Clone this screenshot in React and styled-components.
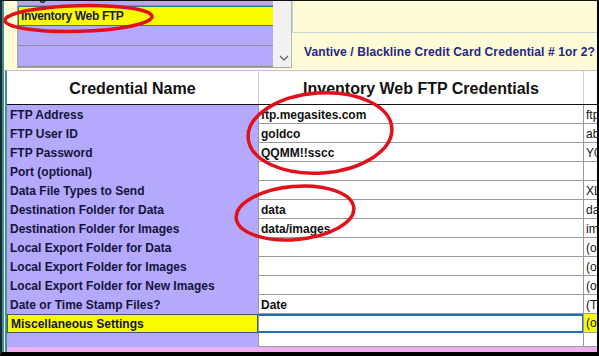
import React from "react";
import styled, { createGlobalStyle } from "styled-components";

const LAVENDER = "#b5a9fd";
const YELLOW = "#fafa00";
const PALE = "#fefcd6";
const TEAL = "#3a8f99";
const GRID = "#9a9a9a";

const rows = [
  { label: "FTP Address", value: "ftp.megasites.com", extra: "ftp" },
  { label: "FTP User ID", value: "goldco", extra: "ab" },
  { label: "FTP Password", value: "QQMM!!sscc", extra: "Y0" },
  { label: "Port (optional)", value: "", extra: "" },
  { label: "Data File Types to Send", value: "", extra: "XL" },
  { label: "Destination Folder for Data", value: "data", extra: "da" },
  { label: "Destination Folder for Images", value: "data/images", extra: "im" },
  { label: "Local Export Folder for Data", value: "", extra: "(o" },
  { label: "Local Export Folder for Images", value: "", extra: "(o" },
  { label: "Local Export Folder for New Images", value: "", extra: "(o" },
  { label: "Date or Time Stamp Files?", value: "Date", extra: "(T" },
  { label: "Miscellaneous Settings", value: "", extra: "(o", selected: true },
];

const App = () => {
  return (
    <>
      <GlobalStyle />
      <Screen>
        <Window>
          <TopArea>
            <ListBox>
              <List>
                <ListItem $hidden>Prog Data Web Service</ListItem>
                <ListItem $active>Inventory Web FTP</ListItem>
                <ListItem />
                <ListItem $tall />
              </List>
              <ScrollTrack>
                <svg width="10" height="7" viewBox="0 0 10 7">
                  <polyline points="1,1 5,5 9,1" fill="none" stroke="#6a6a6a" strokeWidth="1.4" />
                </svg>
              </ScrollTrack>
            </ListBox>
            <RightPanel>
              <UpperBox />
              <Caption>Vantive / Blackline Credit Card Credential # 1or 2?</Caption>
            </RightPanel>
          </TopArea>

          <TableArea>
            <HeaderRow>
              <HeaderCell>Credential Name</HeaderCell>
              <HeaderCell $divider>Inventory Web FTP Credentials</HeaderCell>
              <HeaderCell $divider />
            </HeaderRow>
            {rows.map((r) => (
              <Row key={r.label}>
                <LabelCell $selected={r.selected}>{r.label}</LabelCell>
                <ValueCell $selected={r.selected}>{r.value}</ValueCell>
                <ExtraCell $selected={r.selected}>{r.extra}</ExtraCell>
              </Row>
            ))}
            <Row $short>
              <LabelCell />
              <ValueCell />
              <ExtraCell />
            </Row>
            <PinkBand />
          </TableArea>
        </Window>

        <Marks viewBox="0 0 599 356" width="599" height="356">
          <ellipse cx="78.5" cy="18.5" rx="73.5" ry="12.8" transform="rotate(-1.5 78.5 18.5)" />
          <ellipse cx="320" cy="133" rx="72" ry="40" transform="rotate(-4 320 133)" />
          <ellipse cx="295" cy="213" rx="59" ry="26.5" transform="rotate(-5 295 213)" />
        </Marks>
      </Screen>
    </>
  );
};

const GlobalStyle = createGlobalStyle`
  html, body {
    margin: 0;
    padding: 0;
    background: #fff;
  }
  body {
    font-family: "Liberation Sans", Arial, sans-serif;
  }
`;

const Screen = styled.div`
  position: relative;
  width: 599px;
  height: 356px;
  box-sizing: border-box;
  border-top: 1px solid #111;
  border-left: 2px solid #1c2a2e;
  border-right: 2px solid #000;
  border-bottom: 4px solid #000;
  background: ${PALE};
  overflow: hidden;
`;

const Window = styled.div`
  height: 100%;
  box-sizing: border-box;
  border-left: 2px solid ${TEAL};
  display: flex;
  flex-direction: column;
`;

const TopArea = styled.div`
  height: 67px;
  display: flex;
  flex-shrink: 0;
`;

const ListBox = styled.div`
  margin-left: 13px;
  width: 275px;
  box-sizing: border-box;
  border-left: 1px solid #a8a8a8;
  border-right: 1px solid #b8b8b8;
  border-bottom: 1px solid #a8a8a8;
  display: flex;
  overflow: hidden;
`;

const List = styled.div`
  width: 255px;
  background: ${LAVENDER};
  display: flex;
  flex-direction: column;
`;

const ListItem = styled.div`
  height: ${(p) => (p.$tall ? "22px" : p.$hidden ? "19px" : "20px")};
  margin-top: ${(p) => (p.$hidden ? "-14px" : "0")};
  box-sizing: border-box;
  padding-left: 2px;
  font-size: 12px;
  font-weight: bold;
  letter-spacing: -0.35px;
  line-height: 18px;
  color: #1b1b48;
  white-space: nowrap;
  border-bottom: 1px solid #8c8c9c;
  ${(p) =>
    p.$active &&
    `
    background: ${YELLOW};
    border: 1px solid #2f7f86;
    margin-right: -4px;
  `}
`;

const ScrollTrack = styled.div`
  flex: 1;
  background: #f1f1f1;
  display: flex;
  align-items: flex-end;
  justify-content: center;
  padding-bottom: 5px;
  padding-left: 4px;
`;

const RightPanel = styled.div`
  flex: 1;
  display: flex;
  flex-direction: column;
`;

const UpperBox = styled.div`
  height: 31px;
  border-bottom: 1px solid #c6d3da;
  border-left: 1px solid #c6d3da;
`;

const Caption = styled.div`
  flex: 1;
  display: flex;
  align-items: center;
  padding: 3px 0 0 12px;
  font-size: 12px;
  font-weight: bold;
  letter-spacing: 0.12px;
  color: #24248a;
  white-space: nowrap;
`;

const TableArea = styled.div`
  margin-top: 2px;
  margin-left: 1px;
  border-top: 1px solid #d9b4e2;
  border-left: 2px solid ${TEAL};
  display: flex;
  flex-direction: column;
  flex: 1;
  background: #fff;
`;

const columns = `
  display: grid;
  grid-template-columns: 251px 325px 1fr;
`;

const HeaderRow = styled.div`
  ${columns}
  height: 34px;
  box-sizing: border-box;
  border-bottom: 1px solid #111;
`;

const HeaderCell = styled.div`
  display: flex;
  align-items: center;
  justify-content: center;
  padding-top: 3px;
  font-size: 16px;
  font-weight: bold;
  color: #111;
  white-space: nowrap;
  border-left: ${(p) => (p.$divider ? "1px solid #d0d0d0" : "none")};
`;

const Row = styled.div`
  ${columns}
  height: ${(p) => (p.$short ? "14px" : "19px")};
`;

const cellText = `
  box-sizing: border-box;
  font-size: 12px;
  line-height: 19px;
  padding-top: 1px;
  white-space: nowrap;
  overflow: hidden;
`;

const LabelCell = styled.div`
  ${cellText}
  padding-left: 3px;
  font-weight: bold;
  color: #14143a;
  background: ${(p) => (p.$selected ? YELLOW : LAVENDER)};
  ${(p) => p.$selected && "border: 1px solid #33606a; line-height: 16px;"}
`;

const ValueCell = styled.div`
  ${cellText}
  padding-left: 2px;
  font-weight: bold;
  color: #111;
  border-left: 1px solid ${GRID};
  border-bottom: ${(p) => (p.$selected ? "2px solid #1f6fae" : `1px solid ${GRID}`)};
  ${(p) => p.$selected && "border-top: 2px solid #1f6fae; border-right: 1px solid #1f6fae; line-height: 14px;"}
`;

const ExtraCell = styled.div`
  ${cellText}
  padding-left: 2px;
  color: #111;
  border-left: 1px solid ${GRID};
  border-bottom: 1px solid ${GRID};
  background: ${(p) => (p.$selected ? YELLOW : "#fff")};
  ${(p) => p.$selected && "line-height: 17px;"}
`;

const PinkBand = styled.div`
  height: 5px;
  background: #f2aef0;
`;

const Marks = styled.svg`
  position: absolute;
  top: -1px;
  left: -2px;
  pointer-events: none;

  ellipse {
    fill: none;
    stroke: #e0111b;
    stroke-width: 3.5;
  }
`;

export default App;
